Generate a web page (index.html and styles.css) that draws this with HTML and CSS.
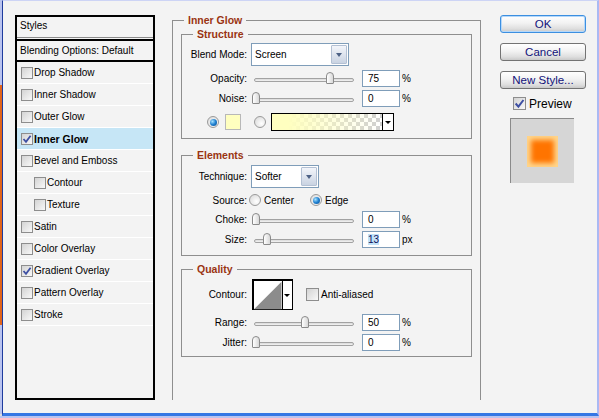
FILE: index.html
```html
<!DOCTYPE html>
<html lang="en">
<head>
  <meta charset="UTF-8">
  <meta name="viewport" content="width=device-width, initial-scale=1.0">
  <title>Layer Style</title>
  <link rel="stylesheet" href="styles.css">
</head>
<body>

  <div class="dialog">

    <!-- Lista de efectos -->
    <div class="styles">
      <div class="styles-head">Styles</div>
      <div class="styles-blend">Blending Options: Default</div>
      <div class="fx"><span class="check"></span>Drop Shadow</div>
      <div class="fx"><span class="check"></span>Inner Shadow</div>
      <div class="fx"><span class="check"></span>Outer Glow</div>
      <div class="fx fx-active"><span class="check"><svg width="10" height="10" viewBox="0 0 10 10"><path d="M1.5 5 L4 7.8 L8.6 1.8" fill="none" stroke="#3d4fa3" stroke-width="1.8"/></svg></span>Inner Glow</div>
      <div class="fx"><span class="check"></span>Bevel and Emboss</div>
      <div class="fx fx-sub"><span class="check"></span>Contour</div>
      <div class="fx fx-sub"><span class="check"></span>Texture</div>
      <div class="fx"><span class="check"></span>Satin</div>
      <div class="fx"><span class="check"></span>Color Overlay</div>
      <div class="fx"><span class="check"><svg width="10" height="10" viewBox="0 0 10 10"><path d="M1.5 5 L4 7.8 L8.6 1.8" fill="none" stroke="#3d4fa3" stroke-width="1.8"/></svg></span>Gradient Overlay</div>
      <div class="fx"><span class="check"></span>Pattern Overlay</div>
      <div class="fx"><span class="check"></span>Stroke</div>
    </div>

    <!-- Opciones del efecto -->
    <fieldset class="panel">
      <legend>Inner Glow</legend>

      <fieldset class="group group-structure">
        <legend>Structure</legend>
        <div class="row row-select">
          <span class="lbl">Blend Mode:</span>
          <div class="select select-blend"><span class="select-text">Screen</span><span class="select-btn"></span></div>
        </div>
        <div class="row">
          <span class="lbl">Opacity:</span>
          <div class="slider"><span class="thumb" style="left: 75%"></span></div>
          <span class="num">75</span><span class="unit">%</span>
        </div>
        <div class="row">
          <span class="lbl">Noise:</span>
          <div class="slider"><span class="thumb" style="left: 0%"></span></div>
          <span class="num">0</span><span class="unit">%</span>
        </div>
        <div class="row row-color">
          <span class="radio on"></span>
          <span class="swatch"></span>
          <span class="radio radio-grad"></span>
          <div class="gradient"><span class="gradient-fill"></span><span class="gradient-btn"></span></div>
        </div>
      </fieldset>

      <fieldset class="group group-elements">
        <legend>Elements</legend>
        <div class="row row-select">
          <span class="lbl">Technique:</span>
          <div class="select select-tech"><span class="select-text">Softer</span><span class="select-btn"></span></div>
        </div>
        <div class="row row-source">
          <span class="lbl">Source:</span>
          <span class="opt opt-first"><span class="radio"></span>Center</span>
          <span class="opt"><span class="radio on"></span>Edge</span>
        </div>
        <div class="row">
          <span class="lbl">Choke:</span>
          <div class="slider"><span class="thumb" style="left: 0%"></span></div>
          <span class="num">0</span><span class="unit">%</span>
        </div>
        <div class="row">
          <span class="lbl">Size:</span>
          <div class="slider"><span class="thumb" style="left: 11.5%"></span></div>
          <span class="num"><span class="sel">13</span></span><span class="unit">px</span>
        </div>
      </fieldset>

      <fieldset class="group group-quality">
        <legend>Quality</legend>
        <div class="row row-contour">
          <span class="lbl">Contour:</span>
          <div class="contour">
            <svg width="29" height="29" viewBox="0 0 29 29"><polygon points="0,29 29,0 29,29" fill="#8c8c8c"/></svg>
            <span class="contour-btn"></span>
          </div>
          <span class="check check-aa"></span><span class="aa-text">Anti-aliased</span>
        </div>
        <div class="row">
          <span class="lbl">Range:</span>
          <div class="slider"><span class="thumb" style="left: 50%"></span></div>
          <span class="num">50</span><span class="unit">%</span>
        </div>
        <div class="row">
          <span class="lbl">Jitter:</span>
          <div class="slider"><span class="thumb" style="left: 0%"></span></div>
          <span class="num">0</span><span class="unit">%</span>
        </div>
      </fieldset>
    </fieldset>

    <!-- Botones y vista previa -->
    <div class="side">
      <button class="btn btn-ok">OK</button>
      <button class="btn">Cancel</button>
      <button class="btn">New Style...</button>
      <div class="preview-toggle"><span class="check check-lg"><svg width="11" height="11" viewBox="0 0 10 10"><path d="M1.5 5 L4 7.8 L8.6 1.8" fill="none" stroke="#3d4fa3" stroke-width="1.8"/></svg></span>Preview</div>
      <div class="preview"><span class="preview-swatch"></span></div>
    </div>

  </div>

</body>
</html>
```

FILE: styles.css
```css
* {
  box-sizing: border-box;
}

body {
  margin: 0;
  background: linear-gradient(#b9c3ef 0 85px, #e2651c 85px 325px, #b9c3ef 325px 414px, #dcdcdc 414px);
  font-family: "Liberation Sans", Arial, sans-serif;
  font-size: 10px;
  color: #000;
}

.dialog {
  display: flex;
  align-items: flex-start;
  height: 416px;
  margin-left: 2px;
  padding: 13px 0 0 12px;
  background-color: #f3f3f3;
  border-top: 1px solid #cdd4f5;
  border-left: 1px solid #1e3b9e;
  border-right: 2px solid #aab9f3;
  border-bottom: 3px solid #3577e4;
}

/* lista de estilos */
.styles {
  flex-shrink: 0;
  width: 140px;
  height: 385px;
  margin-top: 1px;
  border: 2px solid #000;
}

.styles-head {
  height: 21px;
  padding-left: 3px;
  line-height: 18px;
  border-bottom: 1px solid #8a8a8a;
  margin-bottom: 1px;
}

.styles-blend {
  height: 23px;
  padding-left: 3px;
  line-height: 19px;
  border-top: 2px solid #000;
  border-bottom: 2px solid #000;
}

.fx {
  display: flex;
  align-items: center;
  height: 22px;
  padding-left: 4px;
  border-bottom: 1px solid #fff;
}

.fx .check {
  margin-right: 1px;
}

.fx-sub {
  padding-left: 17px;
}

.fx-active {
  background-color: #c6e6f6;
  font-weight: bold;
  font-size: 10.5px;
}

.check {
  display: inline-flex;
  align-items: center;
  justify-content: center;
  flex-shrink: 0;
  width: 12px;
  height: 12px;
  border: 1px solid #8d8d8d;
  background: linear-gradient(135deg, #d3d3d3, #f8f8f8);
}

.check-lg {
  width: 13px;
  height: 13px;
}

/* panel principal */
.panel {
  flex-shrink: 0;
  width: 309px;
  height: 386px;
  margin: 0 0 0 17px;
  padding: 2px 0 0;
  border: 1px solid #8e8e8e;
  border-bottom: 0;
}

.panel legend {
  margin-left: 11px;
  padding: 0 4px;
  font-size: 10.5px;
  font-weight: bold;
  line-height: 12px;
  color: #9a3412;
}

.group {
  margin: 0 8px;
  padding: 0;
  border: 1px solid #8e8e8e;
}

.group-structure {
  padding: 3px 0 7px;
}

.group-elements {
  margin-top: 10px;
  padding: 4px 0 7px;
}

.group-quality {
  margin-top: 7px;
  padding: 4px 0 5px;
}

.row {
  display: flex;
  align-items: center;
  height: 17px;
  margin-top: 3px;
}

.group > div:first-of-type {
  margin-top: 0;
}

.row-select {
  height: 23px;
}

.row-select + .row {
  margin-top: 4px;
}

.row-source {
  height: 16px;
}

.row-color {
  height: 18px;
  margin-top: 6px;
}

.row-contour {
  height: 31px;
}

.row-contour + .row {
  margin-top: 4px;
}

.lbl {
  flex-shrink: 0;
  width: 65px;
  text-align: right;
}

.select {
  display: flex;
  height: 23px;
  margin-left: 4px;
  border: 1px solid #7f9db9;
  background-color: #fff;
}

.select-blend {
  width: 98px;
}

.select-tech {
  width: 68px;
}

.select-text {
  flex: 1;
  padding-left: 3px;
  line-height: 21px;
}

.select-btn {
  display: flex;
  align-items: center;
  justify-content: center;
  width: 16px;
  margin: 1px;
  border: 1px solid #b3c0d3;
  border-radius: 1px;
  background: linear-gradient(#f3f5fa, #c9d3e2);
}

.select-btn::after {
  content: "";
  border-left: 3.5px solid transparent;
  border-right: 3.5px solid transparent;
  border-top: 4px solid #4d6185;
}

.slider {
  position: relative;
  flex-shrink: 0;
  width: 100px;
  height: 4px;
  margin: 2px 0 0 7px;
  border: 1px solid #a2a2a2;
  border-radius: 2px;
  background: linear-gradient(#d8d8d8, #f4f4f4);
}

.thumb {
  position: absolute;
  top: -7px;
  width: 8px;
  height: 12px;
  margin-left: -3px;
  border: 1px solid #8a8a8a;
  border-radius: 4px 4px 1px 1px;
  background: linear-gradient(90deg, #fff, #d8d8d8);
}

.num {
  flex-shrink: 0;
  width: 38px;
  height: 17px;
  margin-left: 8px;
  padding-left: 5px;
  border: 1px solid #7f9db9;
  background-color: #fff;
  line-height: 15px;
}

.sel {
  background-color: #c2e2f8;
  color: #10105a;
}

.unit {
  margin-left: 2px;
}

.radio {
  display: inline-flex;
  align-items: center;
  justify-content: center;
  flex-shrink: 0;
  width: 12px;
  height: 12px;
  border: 1px solid #9a9a9a;
  border-radius: 50%;
  background: radial-gradient(circle at 65% 65%, #fff, #d6d6d6);
}

.radio.on::after {
  content: "";
  width: 7px;
  height: 7px;
  border-radius: 50%;
  background: radial-gradient(circle at 35% 35%, #a6e2ff, #1f80d0 50%, #0b4a8c);
}

.row-color .radio.on {
  margin-left: 25px;
}

.swatch {
  width: 16px;
  height: 16px;
  margin-left: 6px;
  border: 1px solid #b8b8b8;
  background-color: #ffffbf;
}

.radio-grad {
  margin-left: 13px;
}

.gradient {
  display: flex;
  width: 123px;
  height: 18px;
  margin-left: 5px;
  border: 1px solid #000;
  background-color: #fff;
}

.gradient-fill {
  flex: 1;
  border-right: 1px solid #000;
  background:
    linear-gradient(to right, #ffffc0 15%, rgba(255, 255, 192, 0)),
    repeating-conic-gradient(#d0d0d0 0 25%, #fff 0 50%) 0 0 / 8px 8px;
}

.gradient-btn,
.contour-btn {
  display: flex;
  align-items: center;
  justify-content: center;
  width: 10px;
}

.gradient-btn::after,
.contour-btn::after {
  content: "";
  border-left: 3px solid transparent;
  border-right: 3px solid transparent;
  border-top: 3px solid #000;
}

.opt {
  display: flex;
  align-items: center;
  gap: 3px;
}

.opt-first {
  width: 61px;
  margin-left: 2px;
}

.contour {
  display: flex;
  width: 41px;
  height: 31px;
  margin-left: 5px;
  border: solid #000;
  border-width: 2px 1px 1px 2px;
  background-color: #fff;
}

.contour svg {
  border-right: 1px solid #000;
  width: 30px;
}

.check-aa {
  width: 13px;
  height: 13px;
  margin-left: 13px;
}

.aa-text {
  margin-left: 2px;
}

/* columna derecha */
.side {
  display: flex;
  flex-direction: column;
  flex-shrink: 0;
  width: 86px;
  margin: 1px 0 0 19px;
}

.btn {
  width: 86px;
  height: 18px;
  margin-bottom: 10px;
  padding: 0;
  border: 1px solid #737373;
  border-radius: 3px;
  background: linear-gradient(#fff 0%, #f2f2f2 45%, #dedede 80%, #c9c9c9 100%);
  font-family: "Liberation Sans", Arial, sans-serif;
  font-size: 11.5px;
  line-height: 16px;
  color: #12127a;
  cursor: pointer;
}

.btn-ok {
  border-color: #3c8fe0;
  box-shadow: inset 0 0 0 1px #b5d8fa;
}

.preview-toggle {
  display: flex;
  align-items: center;
  height: 13px;
  margin-top: -2px;
  padding-left: 13px;
  font-size: 12px;
}

.preview-toggle .check {
  margin-right: 3px;
}

.preview {
  display: flex;
  align-items: center;
  justify-content: center;
  width: 64px;
  height: 65px;
  margin: 8px 0 0 10px;
  border-top: 1px solid #8a8a8a;
  border-left: 1px solid #8a8a8a;
  background-color: #d6d6d6;
}

.preview-swatch {
  width: 31px;
  height: 31px;
  background-color: #ff7400;
  box-shadow: inset 0 0 5px 4px #ffd68c;
}
```
